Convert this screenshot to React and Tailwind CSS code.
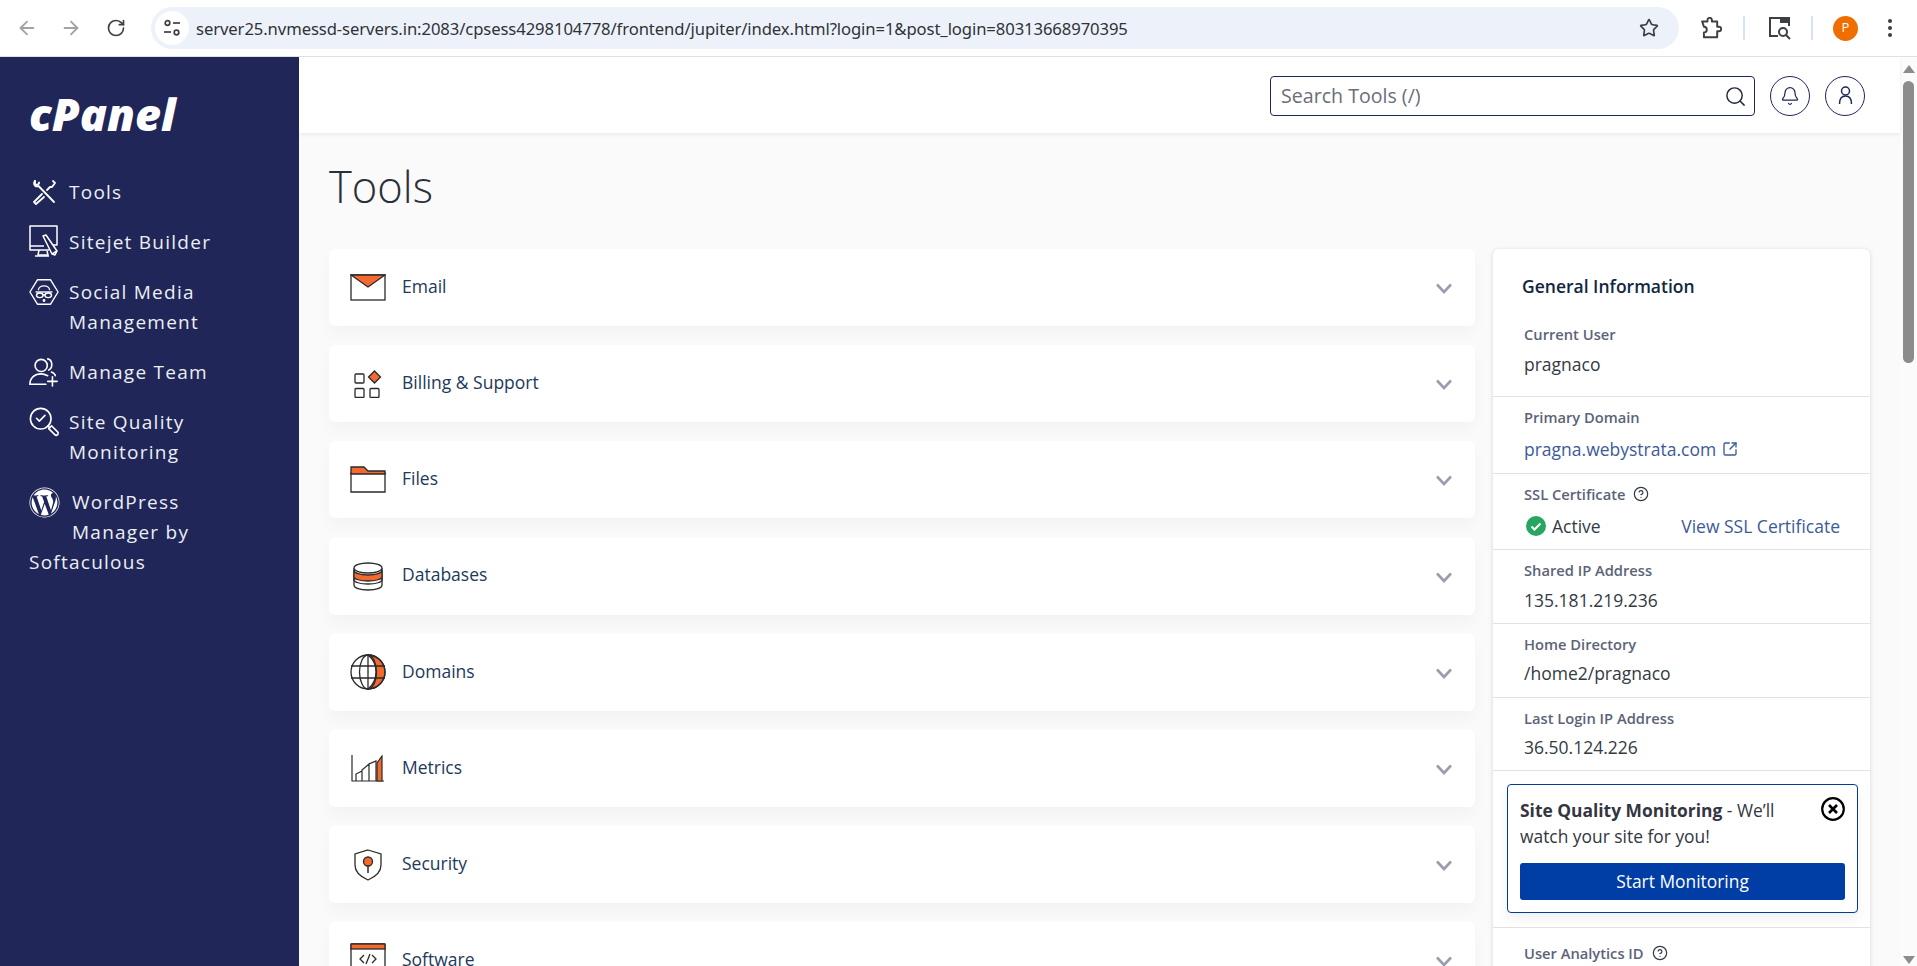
import React from "react";
import { ArrowLeft, ArrowRight, RotateCw, Star, Search, Bell, SquareArrowOutUpRight, CircleHelp } from "lucide-react";
import { FaWordpress } from "react-icons/fa";

const O = "#f26a2e";
const K = "#2a2a2a";

const SiteInfo = () => (
  <svg width="20" height="20" viewBox="0 0 20 20" fill="none" stroke="#3c4043" strokeWidth="1.7">
    <circle cx="5.5" cy="5" r="2.3" /><path d="M11 5h7" />
    <path d="M2 14h7" /><circle cx="14.5" cy="14.5" r="2.3" />
  </svg>
);
const Puzzle = () => (
  <svg width="22" height="23" viewBox="0 0 24 26" fill="none" stroke="#3c4043" strokeWidth="2.2" strokeLinejoin="round">
    <path d="M2 5h6V3.5a2.5 2.5 0 0 1 5 0V5h6v6h2a2.5 2.5 0 0 1 0 5h-2v7H4v-5.500a3 3 0 0 0 0-6.500Z" />
  </svg>
);
const TabSearch = () => (
  <svg width="24" height="24" viewBox="0 0 24 24" fill="none" stroke="#3c4043" strokeWidth="2">
    <path d="M10 20H2V2h19v8" /><rect x="12" y="2" width="9" height="5" fill="#3c4043" stroke="none" />
    <circle cx="15" cy="16" r="4" /><path d="m18 19 4 4" />
  </svg>
);

const ToolsIcon = () => (
  <svg width="30" height="26" viewBox="0 0 30 26" fill="none" stroke="#fff" strokeWidth="1.8" strokeLinecap="round" strokeLinejoin="round">
    <path d="M6 2c-1 1-1.500 3 0 4.500 1 1 2.500 1 3.500.5L25 23" />
    <path d="M6 2v3l2 1 2-1.500 0-1" />
    <path d="M24 2l2 2-3 4-2 0-3 3" /><path d="M13 15 5 23l2 2 8-7" />
  </svg>
);
const SitejetIcon = () => (
  <svg width="30" height="34" viewBox="0 0 30 34" fill="none" stroke="#fff" strokeWidth="1.500" strokeLinejoin="round">
    <path d="M24 20h4V1H1v24h19" /><path d="M1 21h14" /><path d="M10 25l-1 5h10l-1-4" /><path d="M6 31h14" />
    <path d="M14 11l3-1 11 16-2 4-3-1Z" /><path d="M23 29l5-3" />
  </svg>
);
const SocialIcon = () => (
  <svg width="32" height="30" viewBox="0 0 32 30" fill="none" stroke="#fff" strokeWidth="1.500" strokeLinejoin="round">
    <path d="M9 2h14l8 13-8 13H9L1 15Z" />
    <path d="M10 13c0-6 12-6 12 0" /><path d="M7 15h18" />
    <ellipse cx="11.500" cy="18.500" rx="3.500" ry="2.500" /><ellipse cx="20.500" cy="18.500" rx="3.500" ry="2.500" />
    <path d="M15 18h2" /><circle cx="16" cy="24" r=".8" fill="#fff" />
  </svg>
);
const TeamIcon = () => (
  <svg width="32" height="32" viewBox="0 0 32 32" fill="none" stroke="#fff" strokeWidth="1.700" strokeLinecap="round">
    <circle cx="13" cy="9" r="6.500" /><path d="M20 2c5 1 6 9 1 12" /><path d="M24 16c2 1 4 2 4 4" />
    <path d="M1 29c0-7 5-11 12-11 3 0 5 1 7 2" /><path d="M1 29h17" /><path d="M25 21v10M20 26h10" />
  </svg>
);
const QualityIcon = () => (
  <svg width="32" height="32" viewBox="0 0 32 32" fill="none" stroke="#fff" strokeWidth="1.700" strokeLinecap="round" strokeLinejoin="round">
    <circle cx="12.500" cy="12.500" r="11" /><path d="m8 12 3 3 6-6" /><path d="m20 20 2 2" />
    <path d="m21 23 3-3 6.500 6.500a2 2 0 0 1-3 3Z" />
  </svg>
);

const icons = {
  Email: (
    <svg width="36" height="27" viewBox="0 0 36 27" fill="none" stroke={K} strokeWidth="1.300">
      <rect x="1" y="1" width="34" height="25" fill="#fff" />
      <path d="M1 1h34L18 13Z" fill={O} />
    </svg>
  ),
  Billing: (
    <svg width="28" height="28" viewBox="0 0 28 28" fill="none" stroke={K} strokeWidth="1.300">
      <rect x="1" y="4" width="9" height="9" rx="1" /><rect x="1" y="18.500" width="9" height="9" rx="1" /><rect x="16" y="18.500" width="9" height="9" rx="1" />
      <path d="m20.500 1 6 6-6 6-6-6Z" fill={O} />
    </svg>
  ),
  Files: (
    <svg width="36" height="27" viewBox="0 0 36 27" fill="none" stroke={K} strokeWidth="1.300">
      <path d="M1 7h34v19H1Z" fill="#fff" />
      <path d="M1 7V1h13l4 4h17v3H1Z" fill={O} />
    </svg>
  ),
  Databases: (
    <svg width="32" height="29" viewBox="0 0 32 29" fill="none" stroke={K} strokeWidth="1.300">
      <path d="M2 6v17c0 3 6 5 14 5s14-2 14-5V6" fill="#fff" />
      <path d="M2 8v7c0 2 6 4 14 4s14-2 14-4V8c0 3-6 5-14 5S2 11 2 8Z" fill={O} />
      <ellipse cx="16" cy="6" rx="14" ry="5" fill="#fff" />
      <path d="M2 16v2c0 2 6 4 14 4s14-2 14-4v-2" />
    </svg>
  ),
  Domains: (
    <svg width="36" height="36" viewBox="0 0 36 36" fill="none" stroke={K} strokeWidth="1.300">
      <path d="M18 1a17 17 0 0 1 0 34c5-4 8-10 8-17s-3-13-8-17Z" fill={O} />
      <circle cx="18" cy="18" r="17" /><ellipse cx="18" cy="18" rx="8.500" ry="17" />
      <path d="M18 1v34M1 12h34M1 24h34" />
    </svg>
  ),
  Metrics: (
    <svg width="34" height="27" viewBox="0 0 34 27" fill="none" stroke={K} strokeWidth="1.200">
      <path d="M1 0v26h32" />
      <path d="M5 26v-7l6-3v10M11 26V15l7-6v17M18 26V9l7-3v20" />
      <path d="M26 26V8l5-7v25Z" fill={O} />
    </svg>
  ),
  Security: (
    <svg width="28" height="32" viewBox="0 0 28 32" fill="none" stroke={K} strokeWidth="1.300">
      <path d="M14 1 27 5v11c0 7-6 12-13 15C7 28 1 23 1 16V5Z" fill="#fff" />
      <path d="M14 15v9" strokeWidth="1.500" /><circle cx="14" cy="12.500" r="4.500" fill={O} />
    </svg>
  ),
  Software: (
    <svg width="36" height="36" viewBox="0 0 36 36" fill="none" stroke={K} strokeWidth="1.300">
      <rect x="1" y="1" width="34" height="34" rx="1" fill="#fff" /><rect x="1" y="1" width="34" height="5" fill={O} />
      <path d="m14 12-4 4 4 4M22 12l4 4-4 4M20 11l-4 10" />
    </svg>
  ),
};

const sections = [
  ["Email", icons.Email, "Email"],
  ["Billing", icons.Billing, "Billing & Support"],
  ["Files", icons.Files, "Files"],
  ["Databases", icons.Databases, "Databases"],
  ["Domains", icons.Domains, "Domains"],
  ["Metrics", icons.Metrics, "Metrics"],
  ["Security", icons.Security, "Security"],
  ["Software", icons.Software, "Software"],
];

function NavItem({ icon, children }) {
  return (
    <div className="flex items-start gap-[10px] mb-5">
      <span className="w-[30px] h-[30px] shrink-0 flex items-center justify-center">{icon}</span>
      <span className="block">{children}</span>
    </div>
  );
}

function Row({ label, extra, children, h, vt, lt = "mt-[10px]" }) {
  return (
    <div className={`border-t border-[#e2e2e4] pl-[31px] pr-8 ${h}`}>
      <div className={`flex items-center gap-2 h-5 text-[14.700px] font-semibold text-[#5c6379] ${lt}`}>
        {label}{extra}
      </div>
      <div className={`leading-6 text-[17.500px] text-[#333a44] ${vt}`}>{children}</div>
    </div>
  );
}

export default function App() {
  return (
    <div className="w-[1917px] h-[966px] overflow-hidden flex flex-col bg-[#fafafa] font-['Open_Sans',sans-serif]">
      {/* browser chrome */}
      <div className="h-[57px] shrink-0 bg-white border-b border-[#dfe1e5] flex items-center pl-[16px] pr-[16px] text-[#3c4043]">
        <ArrowLeft size={22} className="text-[#a0a4a8]" />
        <ArrowRight size={22} className="text-[#a0a4a8] ml-[22px]" />
        <RotateCw size={20} className="ml-[24px] text-[#3c4043]" />
        <div className="ml-[25px] w-[1528px] h-[42px] rounded-full bg-[#edf2fa] flex items-center pl-[4px] pr-[20px]">
          <span className="w-[34px] h-[34px] rounded-full bg-white flex items-center justify-center shrink-0"><SiteInfo /></span>
          <span className="ml-[7px] text-[16.670px] text-[#2f3337] whitespace-nowrap tracking-[-0.1px] font-['Noto_Sans',sans-serif]">server25.nvmessd-servers.in:2083/cpsess4298104778/frontend/jupiter/index.html?login=1&amp;post_login=80313668970395</span>
          <Star size={20} strokeWidth={2} className="ml-auto shrink-0 text-[#3c4043]" />
        </div>
        <span className="ml-[21px]"><Puzzle /></span>
        <span className="ml-[21px] w-[2px] h-[24px] bg-[#d3e3fd]" />
        <span className="ml-[23px]"><TabSearch /></span>
        <span className="ml-[19px] w-[2px] h-[24px] bg-[#d3e3fd]" />
        <span className="ml-[20px] w-[25px] h-[25px] rounded-full bg-[#f06d00] text-white text-[13px] flex items-center justify-center">P</span>
        <span className="ml-[30px] flex flex-col gap-[3px]">
          <i className="w-1 h-1 rounded-full bg-[#3c4043]" /><i className="w-1 h-1 rounded-full bg-[#3c4043]" /><i className="w-1 h-1 rounded-full bg-[#3c4043]" />
        </span>
      </div>

      <div className="flex-1 flex min-h-0">
        {/* sidebar */}
        <aside className="w-[299px] shrink-0 bg-[#202657] text-[#eceef5] pl-[29px] pr-4 text-[19px] leading-[30px] tracking-[1.250px]">
          <div className="h-[120px] pt-[34px]">
            <div className="italic font-extrabold text-white text-[45px] leading-[46px] tracking-[0px] select-none">cPanel</div>
          </div>
          <NavItem icon={<ToolsIcon />}>Tools</NavItem>
          <NavItem icon={<SitejetIcon />}>Sitejet Builder</NavItem>
          <NavItem icon={<SocialIcon />}>Social Media<br />Management</NavItem>
          <NavItem icon={<TeamIcon />}>Manage Team</NavItem>
          <NavItem icon={<QualityIcon />}>Site Quality<br />Monitoring</NavItem>
          <div>
            <FaWordpress size={31} className="float-left mr-[12px] text-white" />
            WordPress<br />Manager by<br />Softaculous
          </div>
        </aside>

        {/* main */}
        <main className="flex-1 min-w-0 flex flex-col">
          <header className="h-[76px] shrink-0 bg-white shadow-[0_2px_4px_rgba(0,0,0,0.06)] flex items-center justify-end pt-[2px] pr-[35px] gap-[15px] relative">
            <div className="w-[485px] h-10 rounded-[4px] border border-[#20265a] flex items-center pl-[10px] pr-[7px] text-[19.600px] text-[#6b6e78]">
              Search Tools (/)
              <Search size={23} strokeWidth={1.500} className="ml-auto text-[#23283d]" />
            </div>
            <span className="w-10 h-10 rounded-full border border-[#20265a] flex items-center justify-center">
              <Bell size={20} strokeWidth={1.500} className="text-[#20265a]" />
            </span>
            <span className="w-10 h-10 rounded-full border border-[#20265a] flex items-center justify-center">
              <svg width="15" height="20" viewBox="0 0 15 20" fill="none" stroke="#20265a" strokeWidth="1.500"><circle cx="7.500" cy="5" r="4" /><path d="M1.500 18c0-5 2-8 6-8s6 3 6 8" /></svg>
            </span>
          </header>

          <div className="flex-1 min-h-0 overflow-hidden px-[30px]">
            <h1 className="pt-[24px] pb-[32px] text-[43.500px] leading-[60px] font-light text-[#2b2f38]">Tools</h1>
            <div className="flex gap-[18px] items-start">
              <div className="flex-1 flex flex-col gap-[19.200px]">
                {sections.map(([k, icon, label]) => (
                  <div key={k} className="h-[77px] shrink-0 rounded-[6px] bg-white shadow-[0_8px_16px_rgba(0,0,0,0.03)] flex items-center pl-[21px] pr-[23px]">
                    <span className="w-[36px] flex justify-center shrink-0">{icon}</span>
                    <span className="ml-[16px] mb-[3px] text-[17.500px] text-[#22395a]">{label}</span>
                    <svg width="16" height="11" viewBox="0 0 16 11" fill="none" stroke="#9a9cb0" strokeWidth="2.600" className="ml-auto mt-[2px]"><path d="m1 1.500 7 7.500 7-7.500" /></svg>
                  </div>
                ))}
              </div>

              <section className="w-[377px] shrink-0 bg-white rounded-[6px] shadow-[0_1px_5px_rgba(0,0,0,0.14)]">
                <div className="h-[147px] pt-[25px]">
                  <h2 className="pl-[29px] text-[17.500px] leading-6 font-semibold text-[#12263f]">General Information</h2>
                  <div className="pl-[31px] mt-[26px] h-5 leading-5 text-[14.700px] font-semibold text-[#5c6379]">Current User</div>
                  <div className="pl-[31px] mt-[8px] leading-6 text-[17.500px] text-[#333a44]">pragnaco</div>
                </div>
                <Row label="Primary Domain" h="h-[77px]" vt="mt-[10px]">
                  <span className="inline-flex items-center gap-[6px] text-[#3c5a9a]">pragna.webystrata.com<SquareArrowOutUpRight size={16} strokeWidth={2} /></span>
                </Row>
                <Row label="SSL Certificate" extra={<CircleHelp size={16} strokeWidth={1.800} className="text-[#333a44]" />} h="h-[76px]" vt="mt-[10px]">
                  <div className="flex items-center pr-[1px]">
                    <svg width="20" height="20" viewBox="0 0 20 20" className="ml-[2px] mr-[6px]"><circle cx="10" cy="10" r="10" fill="#27a561" /><path d="m5.500 10.500 3 3 6-6" fill="none" stroke="#fff" strokeWidth="2" /></svg>
                    Active
                    <span className="ml-auto -mr-[3px] text-[#3c5a9a]">View SSL Certificate</span>
                  </div>
                </Row>
                <Row label="Shared IP Address" h="h-[74px]" vt="mt-[8px]">135.181.219.236</Row>
                <Row label="Home Directory" h="h-[74px]" vt="mt-[7px]">/home2/pragnaco</Row>
                <Row label="Last Login IP Address" h="h-[73px]" vt="mt-[7px]">36.50.124.226</Row>
                <div className="border-t border-[#e2e2e4] h-[157px] pt-[13px] pl-[14px] pr-[12px]">
                  <div className="h-[129px] rounded-[4px] border border-[#003b9e] bg-white shadow-[0_6px_12px_rgba(0,0,0,0.06)] pt-[11.500px] px-[12px] text-[17.400px] leading-[26.500px] text-[#33363f]">
                    <div className="flex">
                      <p className="flex-1"><b className="font-bold">Site Quality Monitoring</b> - We’ll watch your site for you!</p>
                      <svg width="24" height="24" viewBox="0 0 24 24" className="shrink-0" fill="none" stroke="#000" strokeWidth="2.200"><circle cx="12" cy="12" r="10.800" /><path d="m8 8 8 8M16 8l-8 8" strokeWidth="2.600" /></svg>
                    </div>
                    <div className="mt-[13.500px] h-[37px] rounded-[3px] bg-[#003da5] text-white text-[17.400px] flex items-center justify-center">Start Monitoring</div>
                  </div>
                </div>
                <Row label="User Analytics ID" extra={<CircleHelp size={16} strokeWidth={1.800} className="text-[#333a44]" />} h="h-[74px]" vt="mt-[6px]" lt="mt-[15px]">&nbsp;</Row>
              </section>
            </div>
          </div>
        </main>

        {/* scrollbar */}
        <div className="w-[17px] shrink-0 bg-[#fbfbfb] flex flex-col items-center">
          <span className="mt-[8px] w-0 h-0 border-x-[6px] border-x-transparent border-b-[8px] border-b-[#8c8c8c]" />
          <span className="mt-[8px] w-[11px] h-[282px] rounded-full bg-[#8c8c8c]" />
          <span className="mt-auto mb-[2px] w-0 h-0 border-x-[6px] border-x-transparent border-t-[8px] border-t-[#8c8c8c]" />
        </div>
      </div>
    </div>
  );
}
